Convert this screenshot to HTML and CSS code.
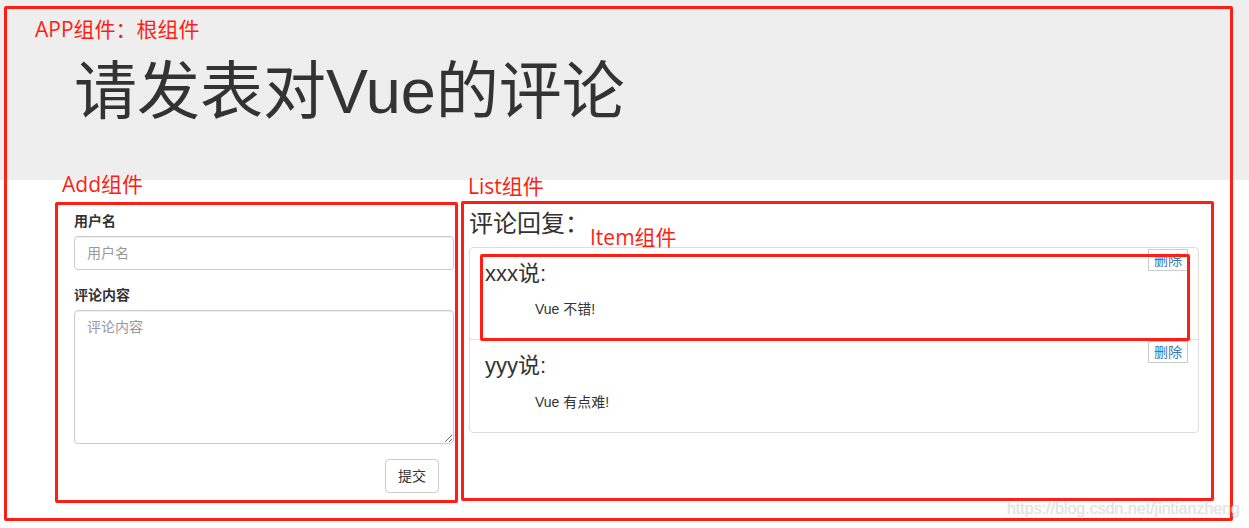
FILE: index.html
```html
<!DOCTYPE html>
<html lang="zh-CN">
<head>
<meta charset="utf-8">
<title>Vue 评论</title>
<link rel="stylesheet" href="styles.css">
</head>
<body>
<div class="app">
  <div class="note note-app">APP组件<span class="colon">：</span>根组件</div>
  <header class="site-header">
    <h1 class="title">请发表对Vue的评论</h1>
  </header>
  <div class="columns">
    <section class="col col-add">
      <div class="note note-col">Add组件</div>
      <div class="frame frame-add">
        <form class="form">
          <div class="form-group">
            <label>用户名</label>
            <input type="text" class="form-control" placeholder="用户名">
          </div>
          <div class="form-group">
            <label>评论内容</label>
            <textarea class="form-control textarea" placeholder="评论内容"></textarea>
          </div>
          <div class="form-actions">
            <button type="button" class="btn">提交</button>
          </div>
        </form>
      </div>
    </section>
    <section class="col col-list">
      <div class="note note-col note-list">List组件</div>
      <div class="frame frame-list">
        <h3 class="reply">评论回复<span class="colon">：</span></h3>
        <ul class="list-group">
          <li class="list-group-item">
            <div class="handle"><a href="#">删除</a></div>
            <p class="user"><span>xxx</span><span>说:</span></p>
            <p class="centence">Vue 不错!</p>
            <div class="item-frame"><span class="note note-item">Item组件</span></div>
          </li>
          <li class="list-group-item">
            <div class="handle"><a href="#">删除</a></div>
            <p class="user"><span>yyy</span><span>说:</span></p>
            <p class="centence">Vue 有点难!</p>
          </li>
        </ul>
      </div>
    </section>
  </div>
</div>
<div class="watermark">https://blog.csdn.net/jintianzheng</div>
</body>
</html>
```
FILE: styles.css
```css
* {
  box-sizing: border-box;
}

html {
  margin: 0;
  padding: 0;
}

body {
  position: relative;
  margin: 0;
  padding: 6px 0 0 4px;
  width: 1249px;
  height: 528px;
  overflow: hidden;
  font-family: "Liberation Sans", "Noto Sans CJK SC", sans-serif;
  font-size: 14px;
  line-height: 20px;
  color: #333;
  background: linear-gradient(to bottom, #eee 0, #eee 180px, #fff 180px, #fff 100%);
}

.app {
  width: 1229px;
  height: 515px;
  border: 3px solid #ff1e14;
  border-radius: 2px;
  padding-top: 8px;
}

.note {
  font-family: "Open Sans", "Noto Sans CJK SC", sans-serif;
  font-size: 21px;
  line-height: 25px;
  color: #ff1e14;
  white-space: nowrap;
}

.colon {
  font-family: "Noto Sans CJK TC", "Noto Sans CJK SC", sans-serif;
  line-height: 0;
}

.note-app {
  padding-left: 28px;
}

.title {
  margin: 15px 0 0;
  padding-left: 67px;
  font-size: 63px;
  line-height: 69px;
  font-weight: normal;
  color: #333;
}

.columns {
  display: flex;
  align-items: flex-start;
  gap: 3px;
  margin: 46px 0 0 48px;
}

.col-add {
  width: 403px;
}

.col-list {
  width: 753px;
}

.note-col {
  padding-left: 7px;
}

.note-list {
  margin-top: 2px;
}

.frame {
  border: 3px solid #ff1e14;
  border-radius: 2px;
}

.frame-add {
  margin-top: 5px;
  height: 301px;
  padding: 6px 1px 0 16px;
}

.frame-list {
  margin-top: 2px;
  height: 300px;
  padding: 7px 12px 0 5px;
}

.form-group {
  margin-bottom: 15px;
}

.form-group label {
  display: block;
  margin-bottom: 5px;
  font-weight: 700;
}

.form-control {
  display: block;
  width: 100%;
  height: 34px;
  padding: 6px 12px;
  font-family: inherit;
  font-size: 14px;
  line-height: 20px;
  color: #555;
  background: #fff;
  border: 1px solid #ccc;
  border-radius: 4px;
  box-shadow: inset 0 1px 1px rgba(0, 0, 0, 0.075);
  margin: 0;
}

.form-control::placeholder {
  color: #999;
}

.textarea {
  height: 134px;
  resize: both;
}

.form-actions {
  display: flex;
  justify-content: flex-end;
  padding-right: 15px;
}

.btn {
  display: inline-block;
  margin: 0;
  padding: 6px 12px;
  font-family: inherit;
  font-size: 14px;
  line-height: 20px;
  color: #333;
  background: #fff;
  border: 1px solid #ccc;
  border-radius: 4px;
}

.reply {
  margin: 0 0 10px;
  font-size: 24px;
  line-height: 26px;
  font-weight: normal;
  color: #333;
}

.list-group {
  width: 730px;
  margin: 0;
  padding: 0;
  list-style: none;
}

.list-group-item {
  position: relative;
  display: block;
  padding: 10px 15px;
  margin-bottom: -1px;
  background: #fff;
  border: 1px solid #ddd;
}

.list-group-item:first-child {
  border-top-left-radius: 4px;
  border-top-right-radius: 4px;
}

.list-group-item:last-child {
  border-bottom-left-radius: 4px;
  border-bottom-right-radius: 4px;
}

.user {
  margin: 0 0 10px;
  font-size: 22px;
  line-height: 31.4px;
}

.centence {
  margin: 0 0 10px;
  padding: 0 50px;
}

.handle {
  position: absolute;
  right: 10px;
  top: 1px;
  width: 40px;
  border: 1px solid #ccc;
  background: #fff;
  text-align: center;
}

.handle a {
  display: block;
  color: #337ab7;
  text-decoration: none;
}

.item-frame {
  position: absolute;
  left: 10px;
  top: 6px;
  width: 710px;
  height: 87px;
  border: 3px solid #ff1e14;
  border-radius: 2px;
  z-index: 2;
  pointer-events: none;
}

.note-item {
  position: absolute;
  left: 107px;
  top: -32px;
}

.watermark {
  position: absolute;
  right: 9px;
  top: 500px;
  font-size: 16px;
  line-height: 18px;
  color: #e4e4e4;
  text-shadow: 0 0 1px rgba(0, 0, 0, 0.12);
  white-space: nowrap;
}
```
